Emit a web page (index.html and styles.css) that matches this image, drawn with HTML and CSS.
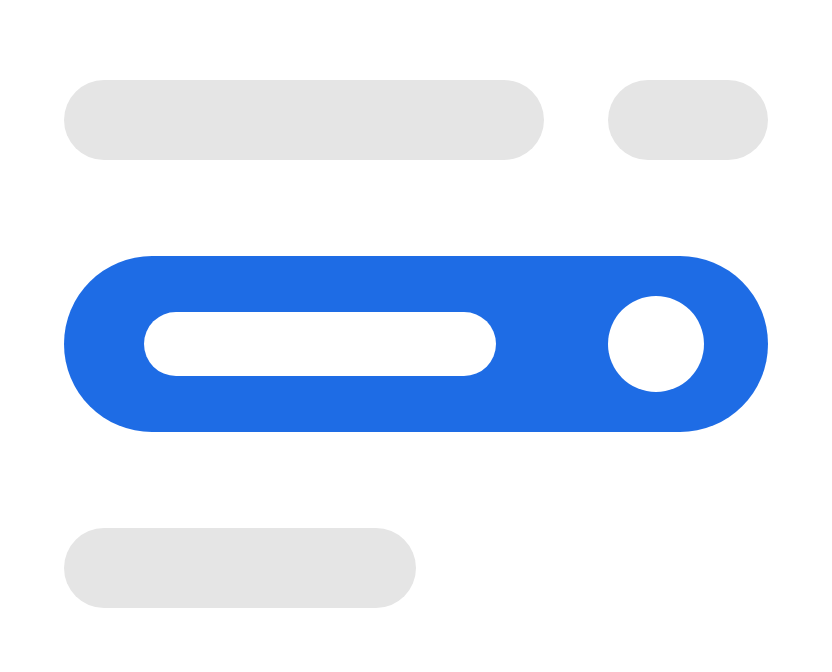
FILE: index.html
```html
<!DOCTYPE html>
<html>
<head>
<meta charset="utf-8">
<link rel="stylesheet" href="styles.css">
</head>
<body>
<div class="page">
  <div class="row">
    <div class="pill pill-wide"></div>
    <div class="pill pill-small"></div>
  </div>
  <div class="active">
    <div class="inner-pill"></div>
    <div class="knob"></div>
  </div>
  <div class="row">
    <div class="pill pill-mid"></div>
  </div>
</div>
</body>
</html>
```
FILE: styles.css
```css
html, body {
  margin: 0;
  padding: 0;
  background: #ffffff;
}
.page {
  width: 832px;
  height: 672px;
  box-sizing: border-box;
  padding: 80px 64px 64px;
  display: flex;
  flex-direction: column;
  gap: 96px;
}
.row {
  display: flex;
  gap: 64px;
  height: 80px;
  flex-shrink: 0;
}
.pill {
  height: 80px;
  border-radius: 40px;
  background: #e5e5e5;
}
.pill-wide { width: 480px; }
.pill-small { width: 160px; }
.pill-mid { width: 352px; }
.active {
  height: 176px;
  flex-shrink: 0;
  border-radius: 88px;
  background: #1e6ce5;
  display: flex;
  align-items: center;
  justify-content: space-between;
  padding: 0 64px 0 80px;
}
.inner-pill {
  width: 352px;
  height: 64px;
  border-radius: 32px;
  background: #ffffff;
}
.knob {
  width: 96px;
  height: 96px;
  border-radius: 50%;
  background: #ffffff;
}
```
